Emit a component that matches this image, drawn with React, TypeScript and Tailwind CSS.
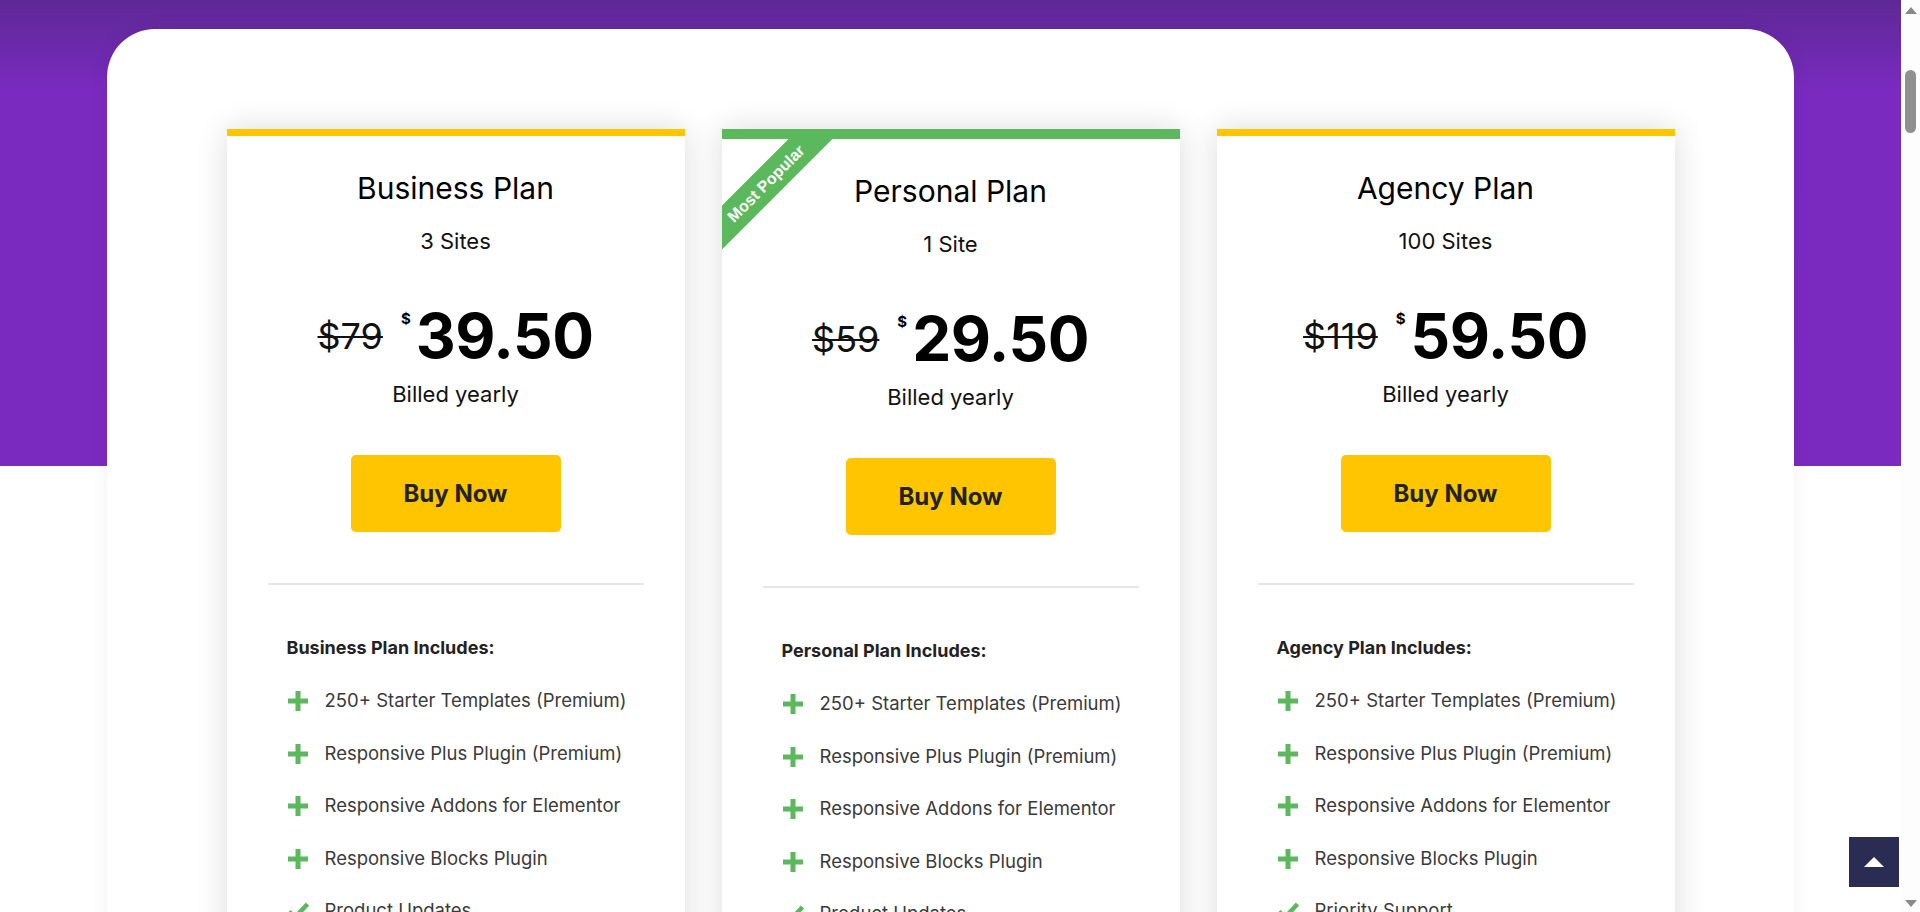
import { ReactNode } from 'react';

type Feature = { icon: 'plus' | 'check'; text: string };

type Plan = {
  name: string;
  sites: string;
  oldPrice: string;
  price: string;
  featured?: boolean;
  features: Feature[];
};

const base: Feature[] = [
  { icon: 'plus', text: '250+ Starter Templates (Premium)' },
  { icon: 'plus', text: 'Responsive Plus Plugin (Premium)' },
  { icon: 'plus', text: 'Responsive Addons for Elementor' },
  { icon: 'plus', text: 'Responsive Blocks Plugin' },
];

const plans: Plan[] = [
  {
    name: 'Business Plan',
    sites: '3 Sites',
    oldPrice: '$79',
    price: '39.50',
    features: [
      ...base,
      { icon: 'check', text: 'Product Updates' },
      { icon: 'check', text: 'Priority Support' },
      { icon: 'check', text: 'Unlimited Websites' },
    ],
  },
  {
    name: 'Personal Plan',
    sites: '1 Site',
    oldPrice: '$59',
    price: '29.50',
    featured: true,
    features: [
      ...base,
      { icon: 'check', text: 'Product Updates' },
      { icon: 'check', text: 'Priority Support' },
      { icon: 'check', text: 'Unlimited Websites' },
    ],
  },
  {
    name: 'Agency Plan',
    sites: '100 Sites',
    oldPrice: '$119',
    price: '59.50',
    features: [
      ...base,
      { icon: 'check', text: 'Priority Support' },
      { icon: 'check', text: 'Product Updates' },
      { icon: 'check', text: 'Unlimited Websites' },
    ],
  },
];

function PlusIcon() {
  return (
    <svg width="22" height="22" viewBox="0 0 22 22" className="shrink-0">
      <path d="M11 1v20M1 11h20" stroke="#5cb85c" strokeWidth="5" />
    </svg>
  );
}

function CheckIcon() {
  return (
    <svg width="22" height="22" viewBox="0 0 22 22" className="shrink-0">
      <path d="M2 11.5l6 6L20.5 4" stroke="#5cb85c" strokeWidth="4.5" fill="none" />
    </svg>
  );
}

// diagonal "Most Popular" band in the top-left corner
function Ribbon() {
  return (
    <div className="absolute left-[-46px] top-[29px] flex h-[31px] w-[180px] -rotate-45 items-center justify-center bg-[#5cb85c] font-['Liberation_Sans',Arial,sans-serif] text-[16px] font-bold text-white">
      Most Popular
    </div>
  );
}

function PlanCard({ plan }: { plan: Plan }) {
  const top = plan.featured
    ? 'border-t-[10px] border-[#5cb85c]'
    : 'border-t-[7px] border-[#ffc500]';

  return (
    <div className={`relative w-[458px] shrink-0 overflow-hidden bg-white shadow-[0_0_30px_rgba(0,0,0,0.14)] ${top}`}>
      {plan.featured && <Ribbon />}
      <div className="flex flex-col items-center px-[41px] pt-[34px] pb-[40px]">
        <h3 className="text-[30px] leading-[36px] text-black">{plan.name}</h3>
        <p className="mt-[21px] text-[22px] leading-[28px] text-[#111]">{plan.sites}</p>

        <div className="mt-[50px] flex h-[62px] items-center">
          <span className="text-[36px] leading-none text-[#111] line-through decoration-[2px]">
            {plan.oldPrice}
          </span>
          <span className="ml-[18px] mt-[6px] self-start text-[15px] font-bold leading-none text-black">$</span>
          <span className="ml-[5px] text-[62px] font-bold leading-none tracking-[-0.5px] text-black">
            {plan.price}
          </span>
        </div>

        <p className="mt-[13px] text-[22px] leading-[28px] text-[#111]">Billed yearly</p>

        <button className="mt-[47px] h-[77px] w-[210px] rounded-[5px] bg-[#ffc500] text-[24px] font-bold text-[#222]">
          Buy Now
        </button>

        <div className="mt-[51px] h-[2px] w-full bg-[#e6e6e6]" />

        <div className="mt-[51px] self-stretch pl-[19px]">
          <h4 className="text-[18px] font-bold leading-[24px] text-[#222]">{plan.name} Includes:</h4>
          <ul className="mt-[15px]">
            {plan.features.map((f) => (
              <li key={f.text} className="flex h-[52.5px] items-center gap-[16px] text-[18.5px] text-[#3a3a3a]">
                {f.icon === 'plus' ? <PlusIcon /> : <CheckIcon />}
                <span>{f.text}</span>
              </li>
            ))}
          </ul>
        </div>
      </div>
    </div>
  );
}

function FakeScrollbar(): ReactNode {
  return (
    <div className="flex w-[19px] shrink-0 flex-col items-center bg-[#fdfdfd]">
      <svg width="12" height="17" viewBox="0 0 12 17" className="mt-[2px]">
        <path d="M0 12L6 5l6 7z" fill="#8a8a8a" />
      </svg>
      <div className="mt-[51px] h-[63px] w-[11px] rounded-full bg-[#909090]" />
      <div className="flex-1" />
      <svg width="12" height="17" viewBox="0 0 12 17">
        <path d="M0 5l6 7 6-7z" fill="#8a8a8a" />
      </svg>
    </div>
  );
}

export default function App() {
  return (
    <div className="relative flex h-[912px] w-full overflow-hidden font-[Inter,sans-serif]">
      <main className="flex-1 bg-[linear-gradient(180deg,#5d2995_0px,#7a2abf_90px,#7b2ac0_466px,#ffffff_466px)]">
        <section className="mx-[107px] mt-[29px] rounded-t-[48px] bg-white pt-[100px] shadow-[0_0_20px_rgba(0,0,0,0.06)]">
          <div className="flex justify-center gap-[37px]">
            {plans.map((p) => (
              <PlanCard key={p.name} plan={p} />
            ))}
          </div>
        </section>
      </main>
      <FakeScrollbar />

      <button className="absolute bottom-[25px] right-[21px] flex h-[50px] w-[50px] items-center justify-center bg-[#2b2c54]">
        <svg width="20" height="10" viewBox="0 0 20 10">
          <path d="M0 10L10 0l10 10z" fill="#fff" />
        </svg>
      </button>
    </div>
  );
}
